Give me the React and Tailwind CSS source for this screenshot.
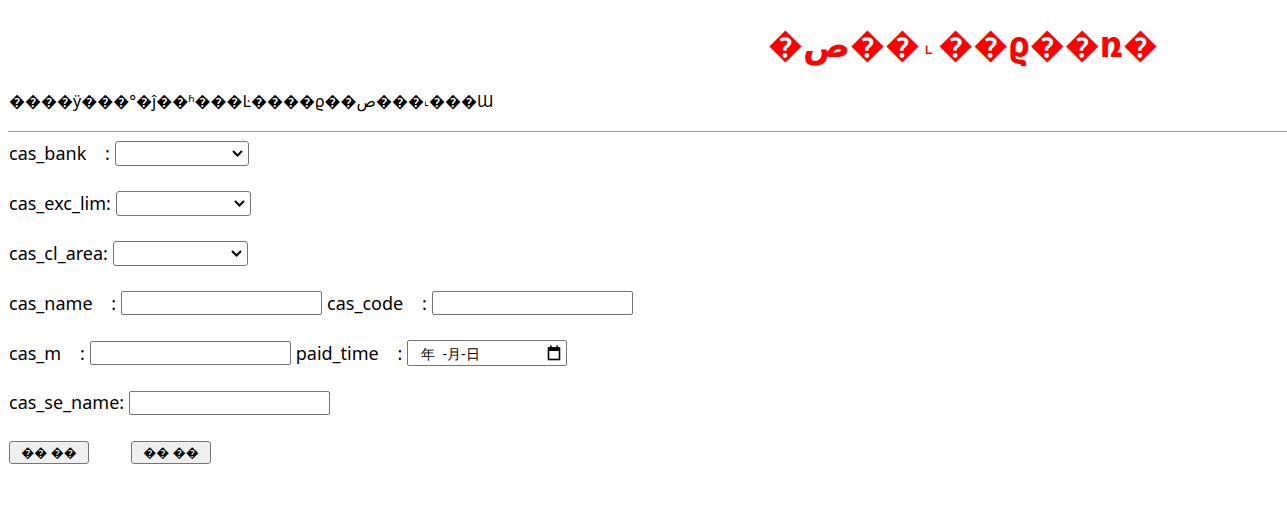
import React from "react";

const Select = ({ w }) => (
  <div
    className={`flex h-[25px] items-center justify-end rounded-[3px] border border-[#767676] bg-white pr-[5px] ${w}`}
  >
    <svg width="11" height="7" viewBox="0 0 11 7">
      <path d="M1 1l4.5 4.5L10 1" fill="none" stroke="#000" strokeWidth="2" />
    </svg>
  </div>
);

const TextBox = () => (
  <div className="h-[24px] w-[201px] rounded-[2px] border border-[#767676] bg-white" />
);

const DateBox = () => (
  <div className="flex h-[26px] w-[160px] items-center justify-between rounded-[2px] border border-[#767676] bg-white pl-[13px] pr-[5px] text-[14px]">
    <span>年&nbsp;&nbsp;-月-日</span>
    <svg width="14" height="16" viewBox="0 0 14 16">
      <rect x="1.5" y="3" width="11" height="11.5" fill="none" stroke="#000" strokeWidth="1.6" />
      <rect x="1" y="2.5" width="12" height="3.5" fill="#000" />
      <rect x="3" y="0.5" width="1.6" height="3" fill="#000" />
      <rect x="9.4" y="0.5" width="1.6" height="3" fill="#000" />
    </svg>
  </div>
);

const Row = ({ children }) => (
  <div className="flex h-[49.8px] items-center gap-[5px]">{children}</div>
);

const Btn = () => (
  <button
    type="button"
    className="h-[23px] w-[80px] rounded-[3px] border border-[#767676] bg-[#efefef] text-[13px]"
  >
    �� ��
  </button>
);

export default function App() {
  return (
    <div className="min-h-[514px] bg-white text-black [font-family:'Noto_Sans','DejaVu_Sans',sans-serif] text-[18px]">
      <h1
        dir="ltr"
        className="h-[67px] pl-[768px] pt-[21px] text-[35px] font-bold leading-[46px] text-[#ff0000] [unicode-bidi:bidi-override]"
      >
        �ص��<span className="relative top-[1px] px-[4px] text-[24px] leading-none">˪</span>��ϱ��ռ�
      </h1>
      <p
        dir="ltr"
        className="mt-[21px] h-[26px] pl-[9px] text-[16px] leading-[26px] [unicode-bidi:bidi-override]"
      >
        ����ÿ���°�ĵ��ʱ���Ŀ����ϱ��ص���<span className="relative top-[1px] text-[12px] leading-none">˪</span>���Ɯ
      </p>
      <hr className="ml-[8px] mt-[17px] border-t border-[#9a9a9a]" />
      <form className="-mt-[3px] pl-[9px]">
        <Row>
          <span>cas_bank&nbsp;&nbsp;&nbsp;&nbsp;:</span>
          <Select w="w-[134px]" />
        </Row>
        <Row>
          <span>cas_exc_lim:</span>
          <Select w="w-[135px]" />
        </Row>
        <Row>
          <span>cas_cl_area:</span>
          <Select w="w-[135px]" />
        </Row>
        <Row>
          <span>cas_name&nbsp;&nbsp;&nbsp;&nbsp;:</span>
          <TextBox />
          <span>cas_code&nbsp;&nbsp;&nbsp;&nbsp;:</span>
          <TextBox />
        </Row>
        <Row>
          <span>cas_m&nbsp;&nbsp;&nbsp;&nbsp;:</span>
          <TextBox />
          <span>paid_time&nbsp;&nbsp;&nbsp;&nbsp;:</span>
          <DateBox />
        </Row>
        <Row>
          <span>cas_se_name:</span>
          <TextBox />
        </Row>
        <div className="flex h-[49.8px] items-center gap-[42px]">
          <Btn />
          <Btn />
        </div>
      </form>
    </div>
  );
}
